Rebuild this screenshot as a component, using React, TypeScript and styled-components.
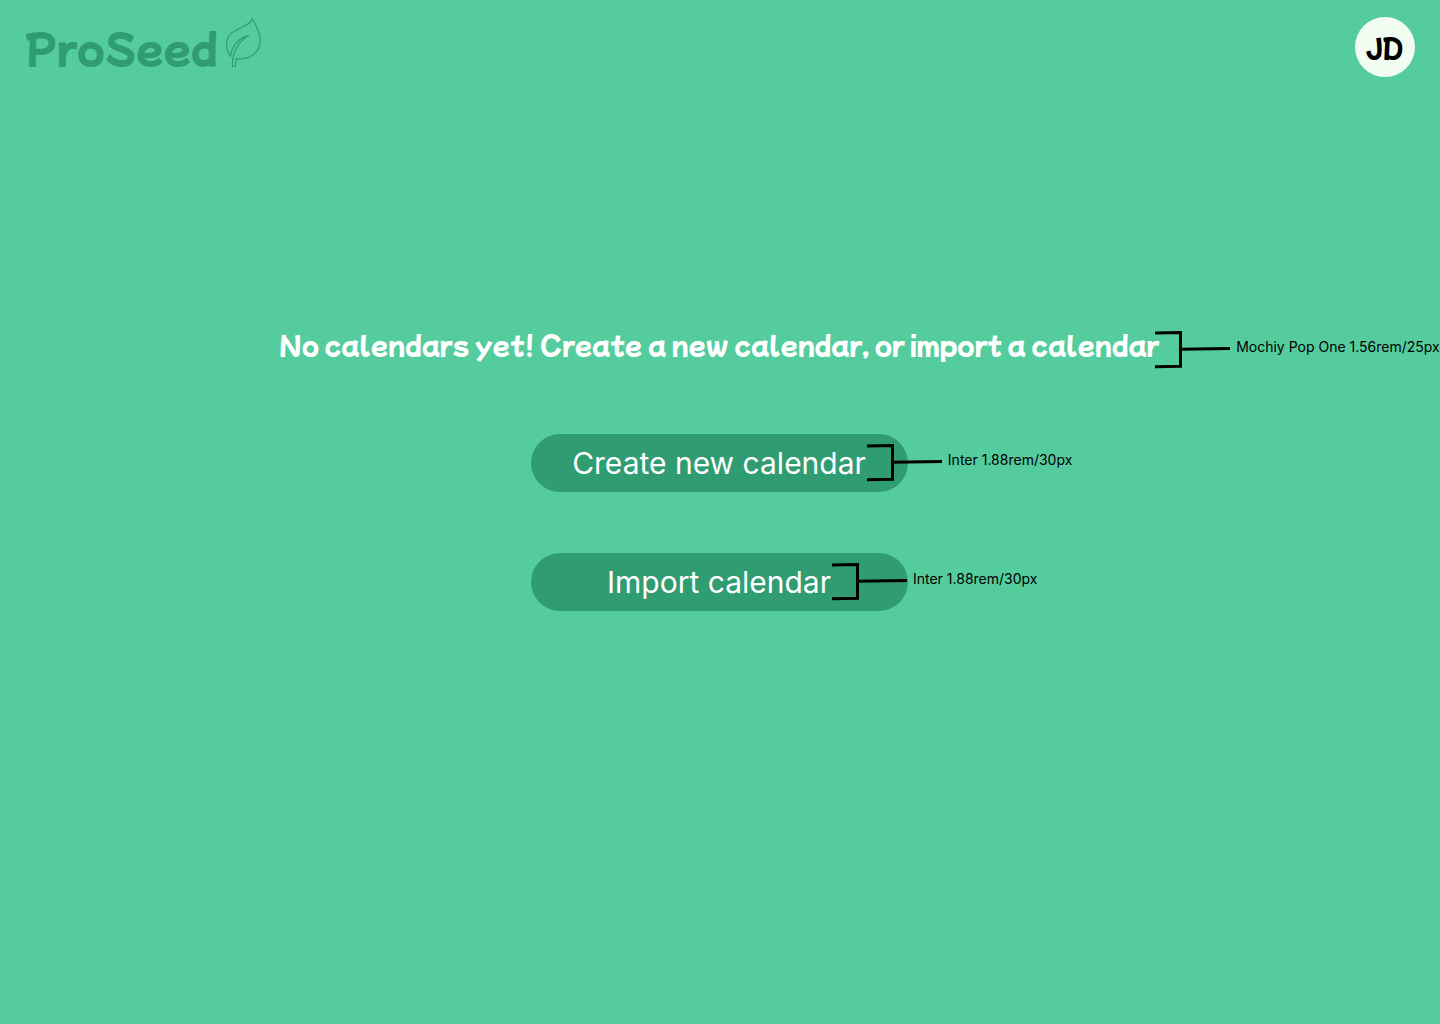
import React from "react";
import styled, { createGlobalStyle } from "styled-components";

const colors = {
  page: "#54cc9e",
  accent: "#309c72",
  avatar: "#f0fdf0",
};

const display = `"Mochiy Pop One", Lato, sans-serif`;

const GlobalStyle = createGlobalStyle`
  *, *::before, *::after { box-sizing: border-box; }
  body {
    margin: 0;
    background: ${colors.page};
    font-family: Inter, sans-serif;
    overflow-x: hidden;
  }
`;

const Page = styled.div`
  min-height: 100vh;
  display: flex;
  flex-direction: column;
`;

const Header = styled.header`
  display: flex;
  align-items: center;
  justify-content: space-between;
  padding: 17px 25px 17px 24px;
`;

const Logo = styled.a`
  display: flex;
  align-items: center;
  gap: 7px;
  color: ${colors.accent};
  font: 400 40px/60px ${display};
  text-decoration: none;
`;

const LeafIcon = styled.svg`
  width: 37px;
  height: 52px;
  align-self: flex-start;
  fill: none;
  stroke: currentColor;
  stroke-width: 1.2;
  stroke-linejoin: round;
`;

const Avatar = styled.button`
  width: 60px;
  height: 60px;
  padding: 0 2px 0 0;
  border: 0;
  border-radius: 50%;
  background: ${colors.avatar};
  color: #000;
  font: 400 25px/60px ${display};
  cursor: pointer;
`;

const Main = styled.main`
  display: flex;
  flex-direction: column;
  align-items: center;
  padding: 232px 2px 64px 0;
`;

const Title = styled.h1`
  margin: 0 0 72px;
  color: #fff;
  font: 400 25px/36px ${display};
  white-space: nowrap;
`;

const Actions = styled.div`
  display: flex;
  flex-direction: column;
  gap: 61px;
`;

const ActionButton = styled.button`
  width: 377px;
  height: 58px;
  padding: 0;
  border: 0;
  border-radius: 29px;
  background: ${colors.accent};
  color: #fff;
  font: 400 30px/36px Inter, sans-serif;
  cursor: pointer;
`;

const Annotated = styled.span`
  position: relative;
  display: inline-block;
  white-space: nowrap;
`;

const Note = styled.span<{ $heading?: boolean }>`
  position: absolute;
  top: ${(p) => (p.$heading ? "5px" : "-1px")};
  left: 100%;
  margin-left: ${(p) => (p.$heading ? "-4px" : "1px")};
  display: flex;
  align-items: flex-start;
  gap: 6px;
  color: #000;
  font: 400 14px/32px Inter, sans-serif;
`;

const Bracket = styled.svg`
  width: 75px;
  height: 38px;
  flex: none;
  fill: none;
  stroke: #000;
  stroke-width: 3;
`;

function Annotation({ text, heading }: { text: string; heading?: boolean }) {
  return (
    <Note $heading={heading}>
      <Bracket viewBox="0 0 75 38" aria-hidden="true">
        <path d="M0 2L25.500 1.500V35.300L0 35.700M25.500 18.300L75 17.400" />
      </Bracket>
      {text}
    </Note>
  );
}

export default function App() {
  return (
    <Page>
      <GlobalStyle />
      <Header>
        <Logo href="#">
          ProSeed
          <LeafIcon viewBox="0 0 37 52" aria-hidden="true">
            <path d="M27.300 1.800C31 8 35.300 15 35.300 23C35.300 35 25 43.500 11.300 41.700C10.500 44 10.500 47 10.300 49.500H7.300C7.300 38 11 26.500 23.700 18.300C14 21 6.500 29 5.700 39.300C2 35 1 30 1.800 25C4 10 24 12 27.300 1.800Z" />
          </LeafIcon>
        </Logo>
        <Avatar type="button">JD</Avatar>
      </Header>
      <Main>
        <Title>
          <Annotated>
            No calendars yet! Create a new calendar, or import a calendar
            <Annotation text="Mochiy Pop One 1.56rem/25px" heading />
          </Annotated>
        </Title>
        <Actions>
          <ActionButton type="button">
            <Annotated>
              Create new calendar
              <Annotation text="Inter 1.88rem/30px" />
            </Annotated>
          </ActionButton>
          <ActionButton type="button">
            <Annotated>
              Import calendar
              <Annotation text="Inter 1.88rem/30px" />
            </Annotated>
          </ActionButton>
        </Actions>
      </Main>
    </Page>
  );
}
